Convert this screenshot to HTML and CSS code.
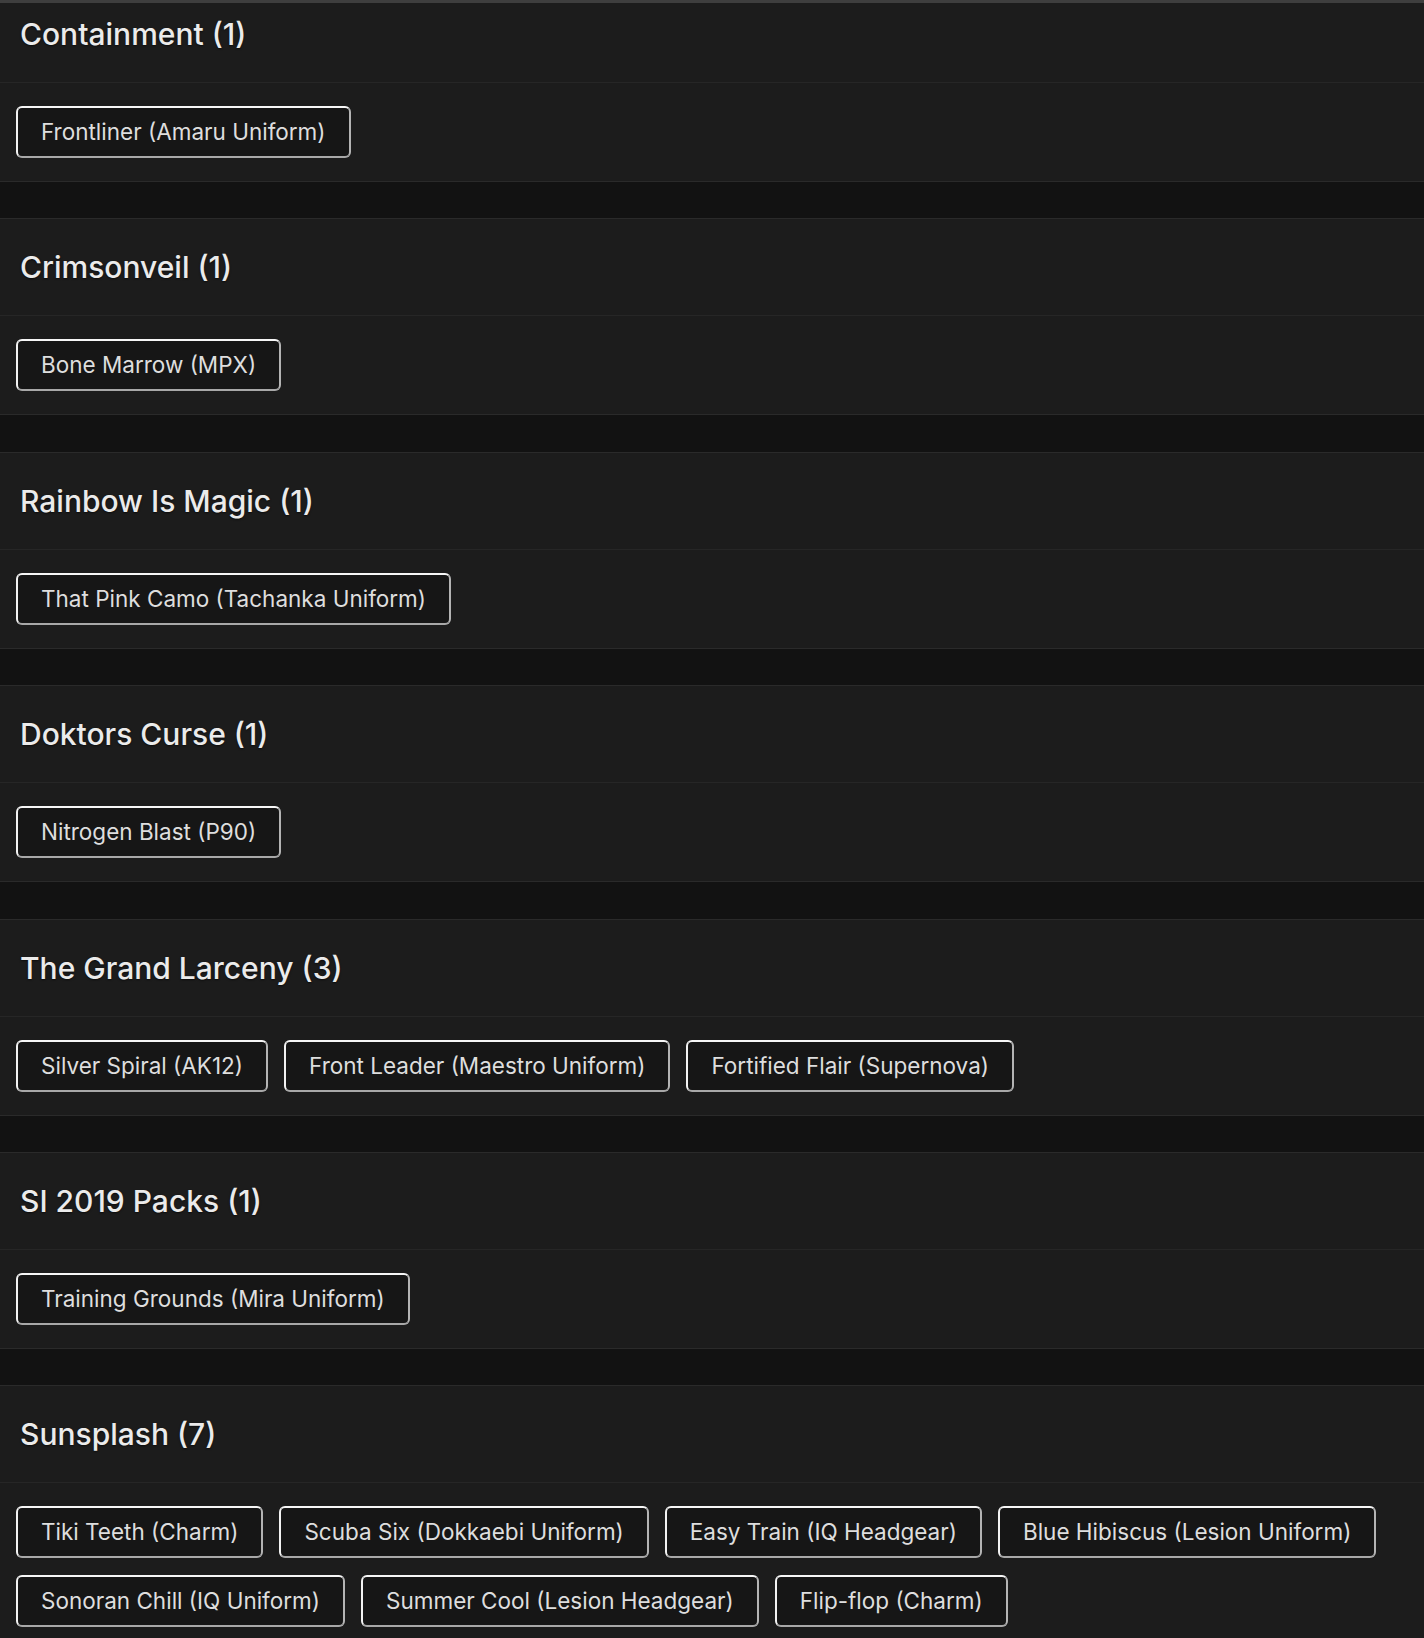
FILE: index.html
```html
<!DOCTYPE html>
<html lang="en">
<head>
    <meta charset="UTF-8">
    <meta name="viewport" content="width=device-width, initial-scale=1.0">
    <title>Bundles</title>
    <link rel="stylesheet" href="styles.css">
</head>
<body>
    <div class="top-edge"></div>

    <main class="bundle-list">
        <section class="bundle">
            <div class="bundle-header"><h4>Containment (1)</h4></div>
            <div class="bundle-items">
                <span class="item-tag">Frontliner (Amaru Uniform)</span>
            </div>
        </section>

        <section class="bundle">
            <div class="bundle-header"><h4>Crimsonveil (1)</h4></div>
            <div class="bundle-items">
                <span class="item-tag">Bone Marrow (MPX)</span>
            </div>
        </section>

        <section class="bundle">
            <div class="bundle-header"><h4>Rainbow Is Magic (1)</h4></div>
            <div class="bundle-items">
                <span class="item-tag">That Pink Camo (Tachanka Uniform)</span>
            </div>
        </section>

        <section class="bundle">
            <div class="bundle-header"><h4>Doktors Curse (1)</h4></div>
            <div class="bundle-items">
                <span class="item-tag">Nitrogen Blast (P90)</span>
            </div>
        </section>

        <section class="bundle">
            <div class="bundle-header"><h4>The Grand Larceny (3)</h4></div>
            <div class="bundle-items">
                <span class="item-tag">Silver Spiral (AK12)</span>
                <span class="item-tag">Front Leader (Maestro Uniform)</span>
                <span class="item-tag">Fortified Flair (Supernova)</span>
            </div>
        </section>

        <section class="bundle">
            <div class="bundle-header"><h4>SI 2019 Packs (1)</h4></div>
            <div class="bundle-items">
                <span class="item-tag">Training Grounds (Mira Uniform)</span>
            </div>
        </section>

        <section class="bundle">
            <div class="bundle-header"><h4>Sunsplash (7)</h4></div>
            <div class="bundle-items">
                <span class="item-tag">Tiki Teeth (Charm)</span>
                <span class="item-tag">Scuba Six (Dokkaebi Uniform)</span>
                <span class="item-tag">Easy Train (IQ Headgear)</span>
                <span class="item-tag">Blue Hibiscus (Lesion Uniform)</span>
                <span class="item-tag">Sonoran Chill (IQ Uniform)</span>
                <span class="item-tag">Summer Cool (Lesion Headgear)</span>
                <span class="item-tag">Flip-flop (Charm)</span>
            </div>
        </section>
    </main>
</body>
</html>
```

FILE: styles.css
```css
body {
    font-family: Inter, 'Noto Sans', sans-serif;
    background-color: #121212;
    color: #e6e6e6;
    margin: 0;
    padding: 0;
    overflow: hidden;
}

.top-edge {
    position: fixed;
    top: 0;
    left: 0;
    right: 0;
    height: 3px;
    background-color: #3e3e3e;
    z-index: 10;
}

.bundle-list {
    display: flex;
    flex-direction: column;
    gap: 36.4px;
    margin-top: -15px;
}

.bundle {
    background-color: #1c1c1c;
    border-top: 1px solid #2a2a2a;
    border-bottom: 1px solid #2a2a2a;
}

.bundle-header {
    height: 96px;
    display: flex;
    align-items: center;
    padding: 0 20px;
    border-bottom: 1px solid #262626;
}

.bundle-header h4 {
    margin: 0;
    font-size: 30px;
    font-weight: 500;
    color: #ebebeb;
    text-shadow: 0 1px 2px rgba(0, 0, 0, 0.6);
}

.bundle-items {
    display: flex;
    flex-wrap: wrap;
    gap: 17px 16px;
    padding: 23px 16px;
}

.item-tag {
    display: inline-block;
    height: 48px;
    line-height: 48px;
    padding: 0 23px;
    font-size: 22.5px;
    color: #dedede;
    background-color: #161616;
    border: 2px solid;
    border-color: #f6f6f6 #b4b4b4 #a8a8a8 #f2f2f2;
    border-radius: 6px;
    white-space: nowrap;
}
```
